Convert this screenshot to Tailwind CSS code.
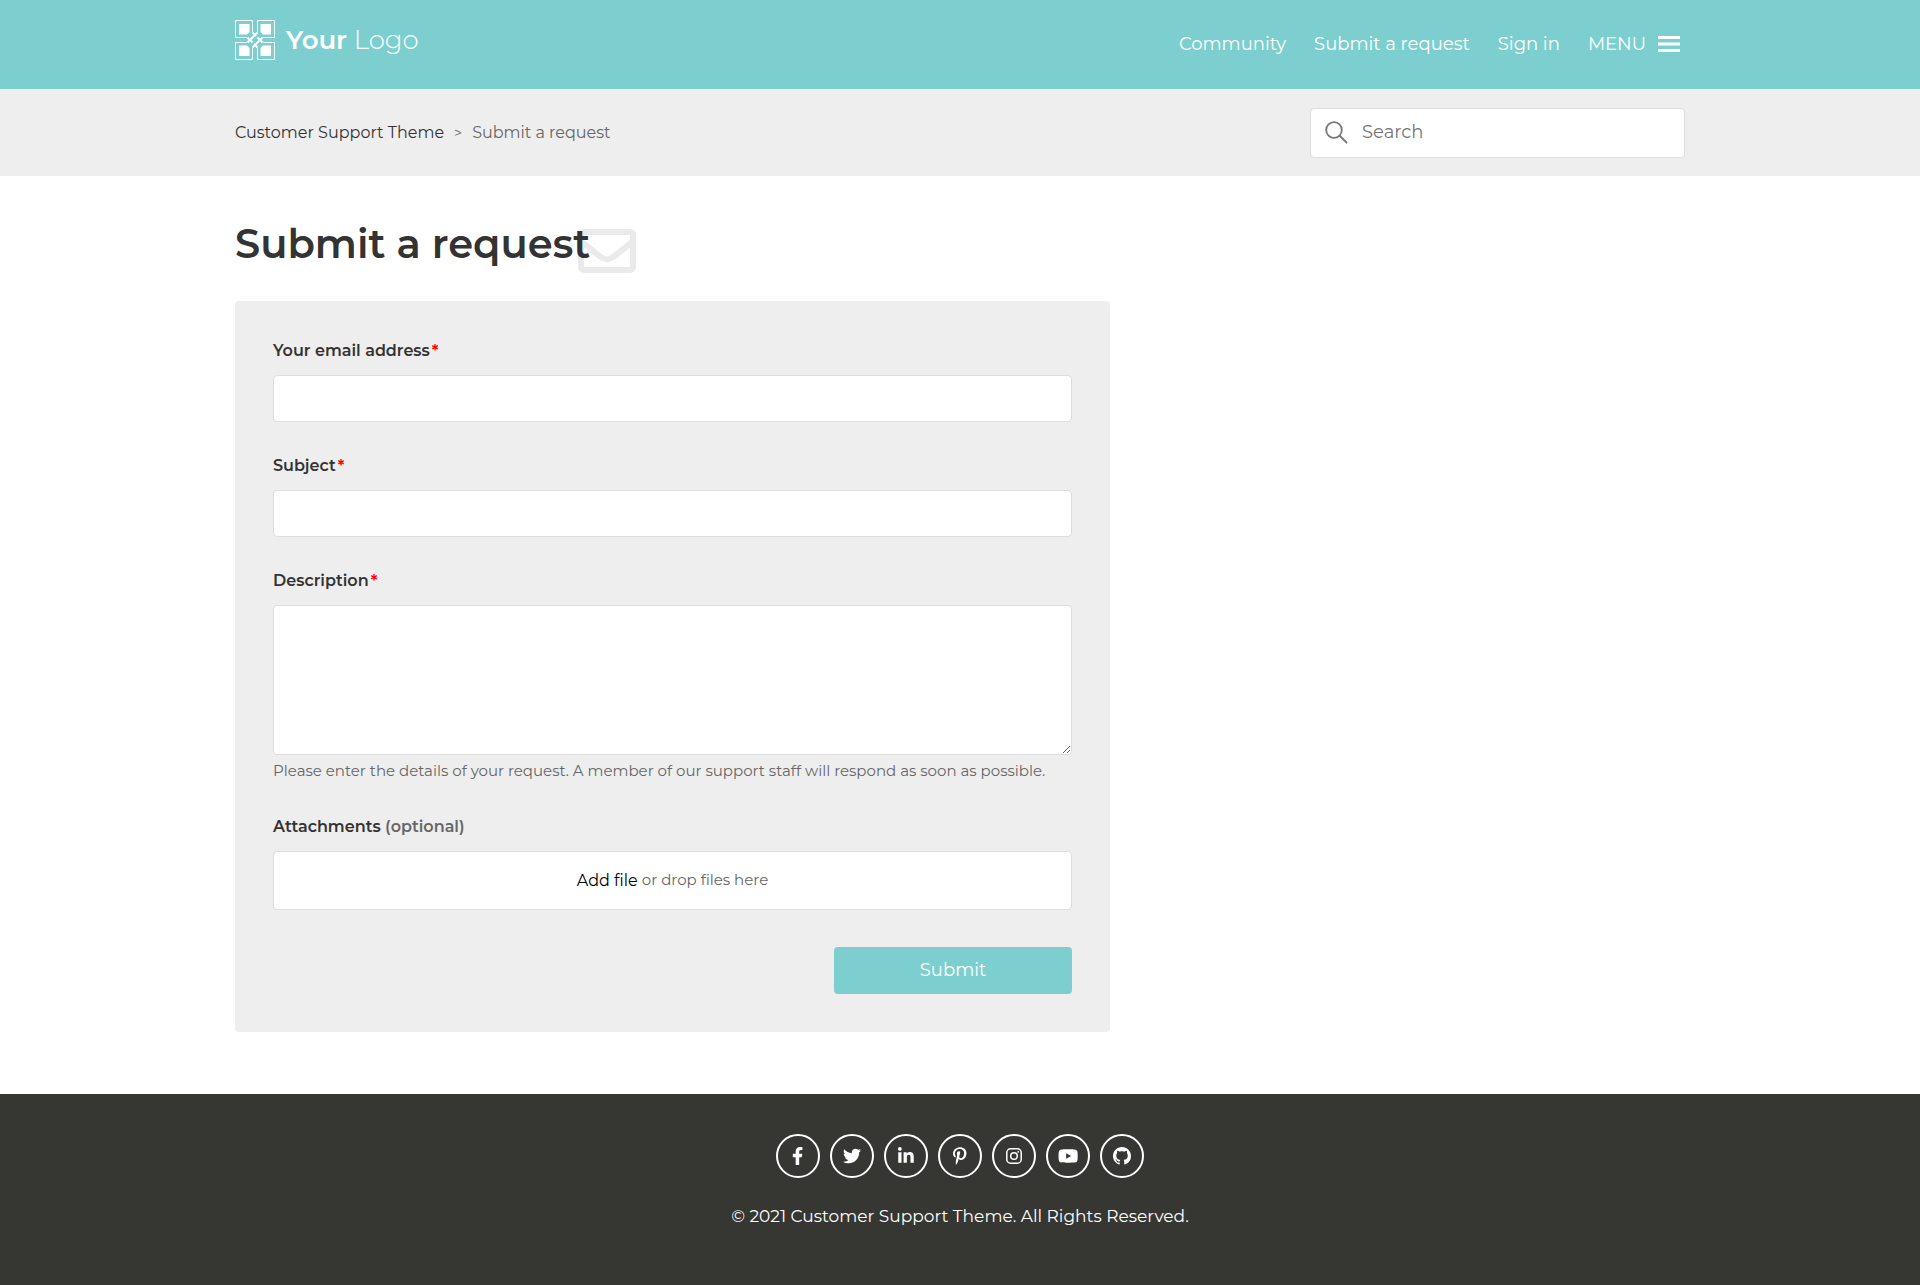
<!DOCTYPE html>
<html lang="en">
<head>
<meta charset="utf-8">
<title>Submit a request</title>
<script src="https://cdn.jsdelivr.net/npm/@tailwindcss/browser@4"></script>
</head>
<body class="flex min-h-screen flex-col bg-white font-['Montserrat','Inter',sans-serif] text-base text-[#333333]">
<header class="bg-[#7dcfcf] text-white">
  <div class="mx-auto flex h-[89px] max-w-[1450px] items-center justify-between pb-[2px]">
    <a href="#" class="flex items-center gap-[11px] pb-2" aria-label="Your Logo">
      <svg class="size-10" viewBox="0 0 40 40" fill="none" stroke="#fff" stroke-width="1">
        <path d="M.5.5h17v11l2.500 2.500 2.500-2.500v-11h17v17h-11l-2.500 2.500 2.500 2.500h11v17h-17v-11l-2.500-2.500-2.500 2.500v11h-17v-17h11l2.500-2.500-2.500-2.500h-11z"/>
        <path fill="#fff" stroke="none" d="M4 4h10.500v8L12 14.500H4zM36 4v10.500h-8L25.500 12V4zM4 36V25.500h8l2.500 2.500v8zM36 36H25.500v-8l2.500-2.500h8z"/>
        <path stroke="#7dcfcf" stroke-width="4" d="M13 22L22 13M18 27l9-9"/>
        <path stroke-width="1.800" d="M12.500 22.500L22.500 12.500M17.500 27.500l10-10"/>
        <path stroke="#7dcfcf" stroke-width="4" d="M16.200 16.200l2.600 2.600M21.200 21.200l2.600 2.600"/>
        <path stroke-width="1.800" d="M17.500 12.500l3.500 3.500M22.500 17.500l5 5M12.500 17.500l5 5M19 24l3.500 3.500M16 19l3-3M21 24l3-3"/>
      </svg>
      <span class="text-[26px] leading-8 font-light"><span class="font-semibold">Your</span> Logo</span>
    </a>
    <nav class="flex items-center gap-7 pr-[5px] text-[18px] leading-6">
      <a href="#">Community</a>
      <a href="#">Submit a request</a>
      <a href="#">Sign in</a>
      <button type="button" class="flex items-center gap-3">MENU
        <svg class="h-4 w-[22px]" viewBox="0 0 22 16" fill="#fff"><path d="M0 0h22v3H0zM0 6.500h22v3H0zM0 13h22v3H0z"/></svg>
      </button>
    </nav>
  </div>
</header>
<div class="bg-[#eeeeee]">
  <div class="mx-auto flex h-[87px] max-w-[1450px] items-center justify-between">
    <nav aria-label="Breadcrumb" class="flex items-center gap-[10px] text-base leading-6">
      <a href="#">Customer Support Theme</a>
      <span class="text-sm text-[#666666]">&gt;</span>
      <span class="text-[#666666]">Submit a request</span>
    </nav>
    <form role="search" class="flex h-[50px] w-[375px] items-center gap-[14px] rounded border border-[#dddddd] bg-white px-[14px]">
      <svg class="size-[23px] shrink-0" viewBox="0 0 23 23" fill="none" stroke="#777777" stroke-width="1.800"><circle cx="9" cy="9" r="7.800"/><path d="M14.500 14.500l7.500 7.500"/></svg>
      <input type="search" aria-label="Search" placeholder="Search" class="w-full min-w-0 text-[18px] outline-none placeholder:text-[#757575]">
    </form>
  </div>
</div>
<main class="mx-auto w-full max-w-[1450px] grow pt-[43px] pb-[62px]">
  <div class="flex">
    <h1 class="relative text-[40px] leading-[50px] font-semibold">
      <svg class="absolute top-[10px] -right-[46px] h-11 w-[58px]" viewBox="0 0 58 44" fill="none" stroke="#eaeaea"><rect x="3" y="3" width="52" height="38" rx="3" stroke-width="6"/><path stroke-width="6" stroke-linejoin="round" d="M4 13c7 6 14 11 18 14.500 5 4 9 4 14 0C40 24 47 19 54 13"/></svg>
      <span class="relative">Submit a request</span>
    </h1>
  </div>
  <form class="mt-8 flex max-w-[875px] flex-col rounded bg-[#eeeeee] px-[38px] py-[38px]">
    <div class="flex flex-col gap-3 pb-8">
      <label for="email" class="flex gap-[2px] leading-6 font-semibold">Your email address <span class="text-[#ff0000]">*</span></label>
      <input id="email" type="email" required class="h-[47px] rounded border border-[#dddddd] bg-white px-3 outline-none">
    </div>
    <div class="flex flex-col gap-3 pb-8">
      <label for="subject" class="flex gap-[2px] leading-6 font-semibold">Subject <span class="text-[#ff0000]">*</span></label>
      <input id="subject" type="text" required class="h-[47px] rounded border border-[#dddddd] bg-white px-3 outline-none">
    </div>
    <div class="flex flex-col pb-8">
      <label for="description" class="mb-3 flex gap-[2px] leading-6 font-semibold">Description <span class="text-[#ff0000]">*</span></label>
      <textarea id="description" required class="h-[150px] resize-y rounded border border-[#dddddd] bg-white p-3 outline-none"></textarea>
      <p class="mt-1 text-[15px] leading-6 text-[#666666]">Please enter the details of your request. A member of our support staff will respond as soon as possible.</p>
    </div>
    <div class="flex flex-col gap-3 pb-[37px]">
      <label for="files" class="leading-6 font-semibold">Attachments <span class="text-[#666666]">(optional)</span></label>
      <div class="relative flex h-[59px] items-center justify-center gap-1 rounded border border-[#dddddd] bg-white">
        <input id="files" type="file" multiple class="absolute inset-0 opacity-0">
        <a href="#" class="text-base text-black">Add file</a>
        <span class="text-[15px] text-[#666666]">or drop files here</span>
      </div>
    </div>
    <button type="submit" class="h-[47px] w-[238px] self-end rounded bg-[#7dcfcf] text-[18px] text-white">Submit</button>
  </form>
</main>
<footer class="flex h-[191px] flex-col items-center bg-[#363732] pt-10 text-white">
  <div class="flex gap-[10px]">
    <a href="#" aria-label="Facebook" class="flex size-11 items-center justify-center rounded-full border-2 border-white"><svg class="h-[18px]" viewBox="0 0 320 512" fill="#fff"><path d="M279.140 288l14.220-92.660h-88.910v-60.130c0-25.350 12.420-50.060 52.240-50.060h40.420V6.260S260.430 0 225.360 0c-73.220 0-121.080 44.380-121.080 124.720v70.620H22.890V288h81.390v224h100.170V288z"/></svg></a>
    <a href="#" aria-label="Twitter" class="flex size-11 items-center justify-center rounded-full border-2 border-white"><svg class="h-[18px]" viewBox="0 0 512 512" fill="#fff"><path d="M459.370 151.716c.325 4.548.325 9.097.325 13.645 0 138.720-105.583 298.558-298.558 298.558-59.452 0-114.680-17.219-161.137-47.106 8.447.974 16.568 1.299 25.340 1.299 49.055 0 94.213-16.568 130.274-44.832-46.132-.975-84.792-31.188-98.112-72.772 6.498.974 12.995 1.624 19.818 1.624 9.421 0 18.843-1.300 27.614-3.573-48.081-9.747-84.143-51.980-84.143-102.985v-1.299c13.969 7.797 30.214 12.670 47.431 13.319-28.264-18.843-46.781-51.005-46.781-87.391 0-19.492 5.197-37.360 14.294-52.954 51.655 63.675 129.300 105.258 216.365 109.807-1.624-7.797-2.599-15.918-2.599-24.040 0-57.828 46.782-104.934 104.934-104.934 30.213 0 57.502 12.670 76.670 33.137 23.715-4.548 46.456-13.320 66.599-25.340-7.798 24.366-24.366 44.833-46.132 57.827 21.117-2.273 41.584-8.122 60.426-16.243-14.292 20.791-32.161 39.308-52.628 54.253z"/></svg></a>
    <a href="#" aria-label="LinkedIn" class="flex size-11 items-center justify-center rounded-full border-2 border-white"><svg class="h-[18px]" viewBox="0 0 448 512" fill="#fff"><path d="M100.280 448H7.400V148.900h92.880zM53.790 108.100C24.090 108.100 0 83.500 0 53.800a53.790 53.790 0 0 1 107.580 0c0 29.700-24.100 54.300-53.790 54.300zM447.900 448h-92.680V302.400c0-34.700-.7-79.200-48.290-79.200-48.290 0-55.690 37.700-55.690 76.700V448h-92.780V148.900h89.080v40.800h1.300c12.400-23.500 42.690-48.300 87.880-48.300 94 0 111.280 61.900 111.280 142.300V448z"/></svg></a>
    <a href="#" aria-label="Pinterest" class="flex size-11 items-center justify-center rounded-full border-2 border-white"><svg class="h-[18px]" viewBox="0 0 384 512" fill="#fff"><path d="M204 6.500C101.400 6.500 0 74.900 0 185.600 0 256 39.600 296 63.600 296c9.900 0 15.600-27.600 15.600-35.400 0-9.300-23.700-29.100-23.700-67.800 0-80.400 61.200-137.400 140.400-137.400 68.100 0 118.500 38.700 118.500 109.800 0 53.100-21.300 152.700-90.300 152.700-24.900 0-46.200-18-46.200-43.800 0-37.800 26.400-74.400 26.400-113.400 0-66.200-93.900-54.200-93.900 25.800 0 16.800 2.100 35.400 9.600 50.700-13.800 59.400-42 147.900-42 209.100 0 18.900 2.700 37.500 4.500 56.400 3.400 3.800 1.700 3.400 6.900 1.500 50.400-69 48.600-82.500 71.400-172.800 12.300 23.400 44.100 36 69.300 36 106.200 0 153.900-103.500 153.900-196.800C384 71.300 298.200 6.500 204 6.500z"/></svg></a>
    <a href="#" aria-label="Instagram" class="flex size-11 items-center justify-center rounded-full border-2 border-white"><svg class="h-4" viewBox="0 0 16 16" fill="none" stroke="#fff" stroke-width="1.500"><rect x=".8" y=".8" width="14.400" height="14.400" rx="3.800"/><circle cx="8" cy="8" r="3.300"/><circle cx="12.200" cy="3.800" r=".9" fill="#fff" stroke="none"/></svg></a>
    <a href="#" aria-label="YouTube" class="flex size-11 items-center justify-center rounded-full border-2 border-white"><svg class="h-[18px]" viewBox="0 0 576 512" fill="#fff"><path d="M549.655 124.083c-6.281-23.650-24.787-42.276-48.284-48.597C458.781 64 288 64 288 64S117.220 64 74.629 75.486c-23.497 6.322-42.003 24.947-48.284 48.597-11.412 42.867-11.412 132.305-11.412 132.305s0 89.438 11.412 132.305c6.281 23.650 24.787 41.500 48.284 47.821C117.220 448 288 448 288 448s170.780 0 213.371-11.486c23.497-6.321 42.003-24.171 48.284-47.821 11.412-42.867 11.412-132.305 11.412-132.305s0-89.438-11.412-132.305zm-317.510 213.508V175.185l142.739 81.205-142.739 81.201z"/></svg></a>
    <a href="#" aria-label="GitHub" class="flex size-11 items-center justify-center rounded-full border-2 border-white"><svg class="h-[18px]" viewBox="0 0 16 16" fill="#fff"><path d="M8 0C3.580 0 0 3.580 0 8c0 3.540 2.290 6.530 5.470 7.590.4.070.55-.17.55-.38 0-.19-.01-.82-.01-1.490-2.010.37-2.530-.49-2.690-.94-.09-.23-.48-.94-.82-1.130-.28-.15-.68-.52-.01-.53.63-.01 1.080.58 1.230.82.72 1.210 1.870.87 2.330.66.070-.52.28-.87.51-1.070-1.780-.2-3.640-.89-3.640-3.950 0-.87.31-1.590.82-2.150-.08-.2-.36-1.020.08-2.120 0 0 .67-.21 2.200.82.64-.18 1.320-.27 2-.27s1.360.09 2 .27c1.530-1.040 2.200-.82 2.200-.82.44 1.100.16 1.920.08 2.120.51.56.82 1.270.82 2.150 0 3.070-1.870 3.750-3.650 3.950.29.25.54.73.54 1.480 0 1.070-.01 1.930-.01 2.200 0 .21.15.46.55.38A8.010 8.010 0 0 0 16 8c0-4.420-3.580-8-8-8z"/></svg></a>
  </div>
  <p class="mt-[26px] text-[17px] leading-6">© 2021 Customer Support Theme. All Rights Reserved.</p>
</footer>
</body>
</html>
